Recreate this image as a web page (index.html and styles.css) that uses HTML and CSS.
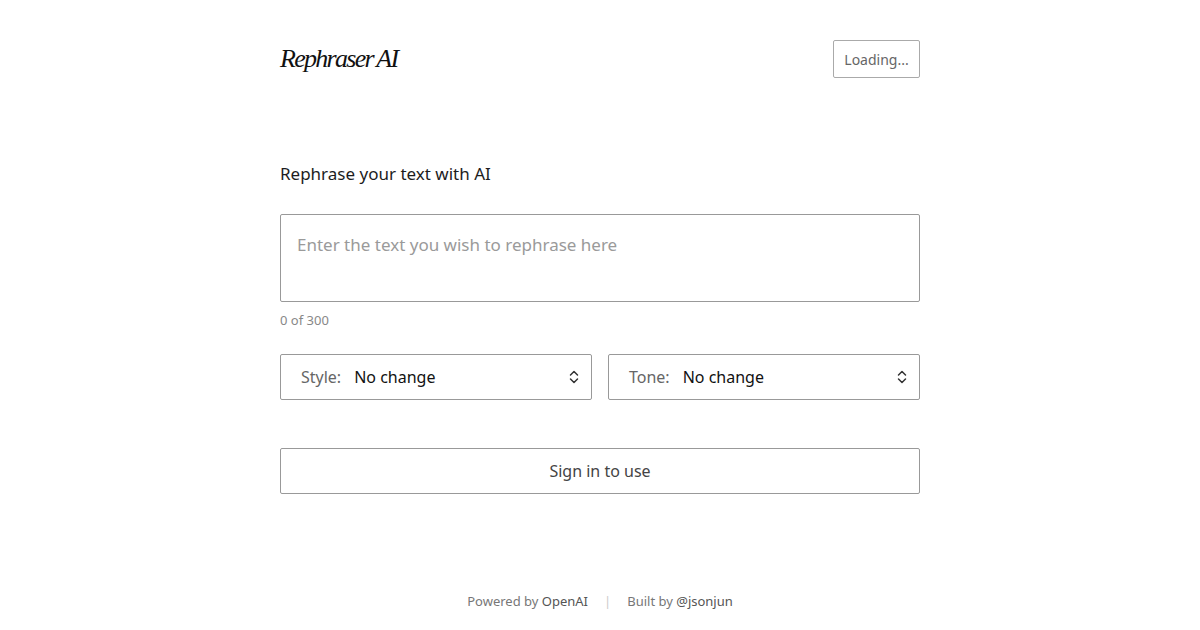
FILE: index.html
```html
<!DOCTYPE html>
<html lang="en">
<head>
<meta charset="utf-8">
<title>Rephraser AI</title>
<link rel="stylesheet" href="styles.css">
</head>
<body>
<div class="page">
  <header class="header">
    <div class="logo">Rephraser AI</div>
    <button class="loading">Loading...</button>
  </header>
  <main class="main">
    <h1 class="title">Rephrase your text with AI</h1>
    <div class="textarea">Enter the text you wish to rephrase here</div>
    <div class="count">0 of 300</div>
    <div class="selects">
      <div class="select">
        <span class="label">Style:</span>
        <span class="value">No change</span>
        <svg class="chev" width="10" height="16" viewBox="0 0 10 16"><path d="M1.5 6 L5 2.5 L8.5 6 M1.5 10 L5 13.5 L8.5 10" fill="none" stroke="#333" stroke-width="1.5" stroke-linecap="round" stroke-linejoin="round"/></svg>
      </div>
      <div class="select">
        <span class="label">Tone:</span>
        <span class="value">No change</span>
        <svg class="chev" width="10" height="16" viewBox="0 0 10 16"><path d="M1.5 6 L5 2.5 L8.5 6 M1.5 10 L5 13.5 L8.5 10" fill="none" stroke="#333" stroke-width="1.5" stroke-linecap="round" stroke-linejoin="round"/></svg>
      </div>
    </div>
    <button class="signin">Sign in to use</button>
  </main>
  <footer class="footer">
    <span>Powered by <span class="strong">OpenAI</span></span>
    <span class="sep">|</span>
    <span>Built by <span class="strong">@jsonjun</span></span>
  </footer>
</div>
</body>
</html>
```
FILE: styles.css
```css
* { box-sizing: border-box; }
html, body { margin: 0; padding: 0; background: #fff; }
body { font-family: "Noto Sans", "Open Sans", sans-serif; color: #222; }
.page { width: 640px; margin: 0 auto; height: 630px; display: flex; flex-direction: column; }
.header { display: flex; justify-content: space-between; align-items: center; padding-top: 40px; height: 78px; }
.logo { font-family: "Liberation Serif", "DejaVu Serif", serif; font-style: italic; font-size: 26px; letter-spacing: -1.7px; word-spacing: -1px; color: #111; }
.loading { width: 87px; height: 38px; border: 1px solid #aaa; border-radius: 2px; background: #fff; color: #666; font-family: inherit; font-size: 14px; padding: 0; }
.main { padding-top: 84px; }
.title { margin: 0; font-size: 17px; font-weight: 400; line-height: 24px; color: #1d1d1d; }
.textarea { margin-top: 28px; height: 88px; border: 1px solid #999; border-radius: 2px; padding: 17px 16px; font-size: 17px; line-height: 26px; color: #9a9a9a; }
.count { margin-top: 9px; font-size: 13px; line-height: 18px; color: #888; }
.selects { margin-top: 25px; display: flex; gap: 16px; }
.select { flex: 1; height: 46px; border: 1px solid #999; border-radius: 2px; display: flex; align-items: center; padding: 0 12px 0 20px; font-size: 16px; }
.label { color: #666; margin-right: 13px; }
.value { color: #111; flex: 1; }
.chev { display: block; }
.signin { margin-top: 48px; width: 100%; height: 46px; border: 1px solid #999; border-radius: 2px; background: #fff; font-family: inherit; font-size: 16px; color: #444; padding: 0; display: block; }
.footer { margin-top: auto; padding-bottom: 20px; display: flex; justify-content: center; gap: 16px; font-size: 13px; color: #777; line-height: 18px; }
.strong { color: #555; }
.sep { color: #ccc; }
```
